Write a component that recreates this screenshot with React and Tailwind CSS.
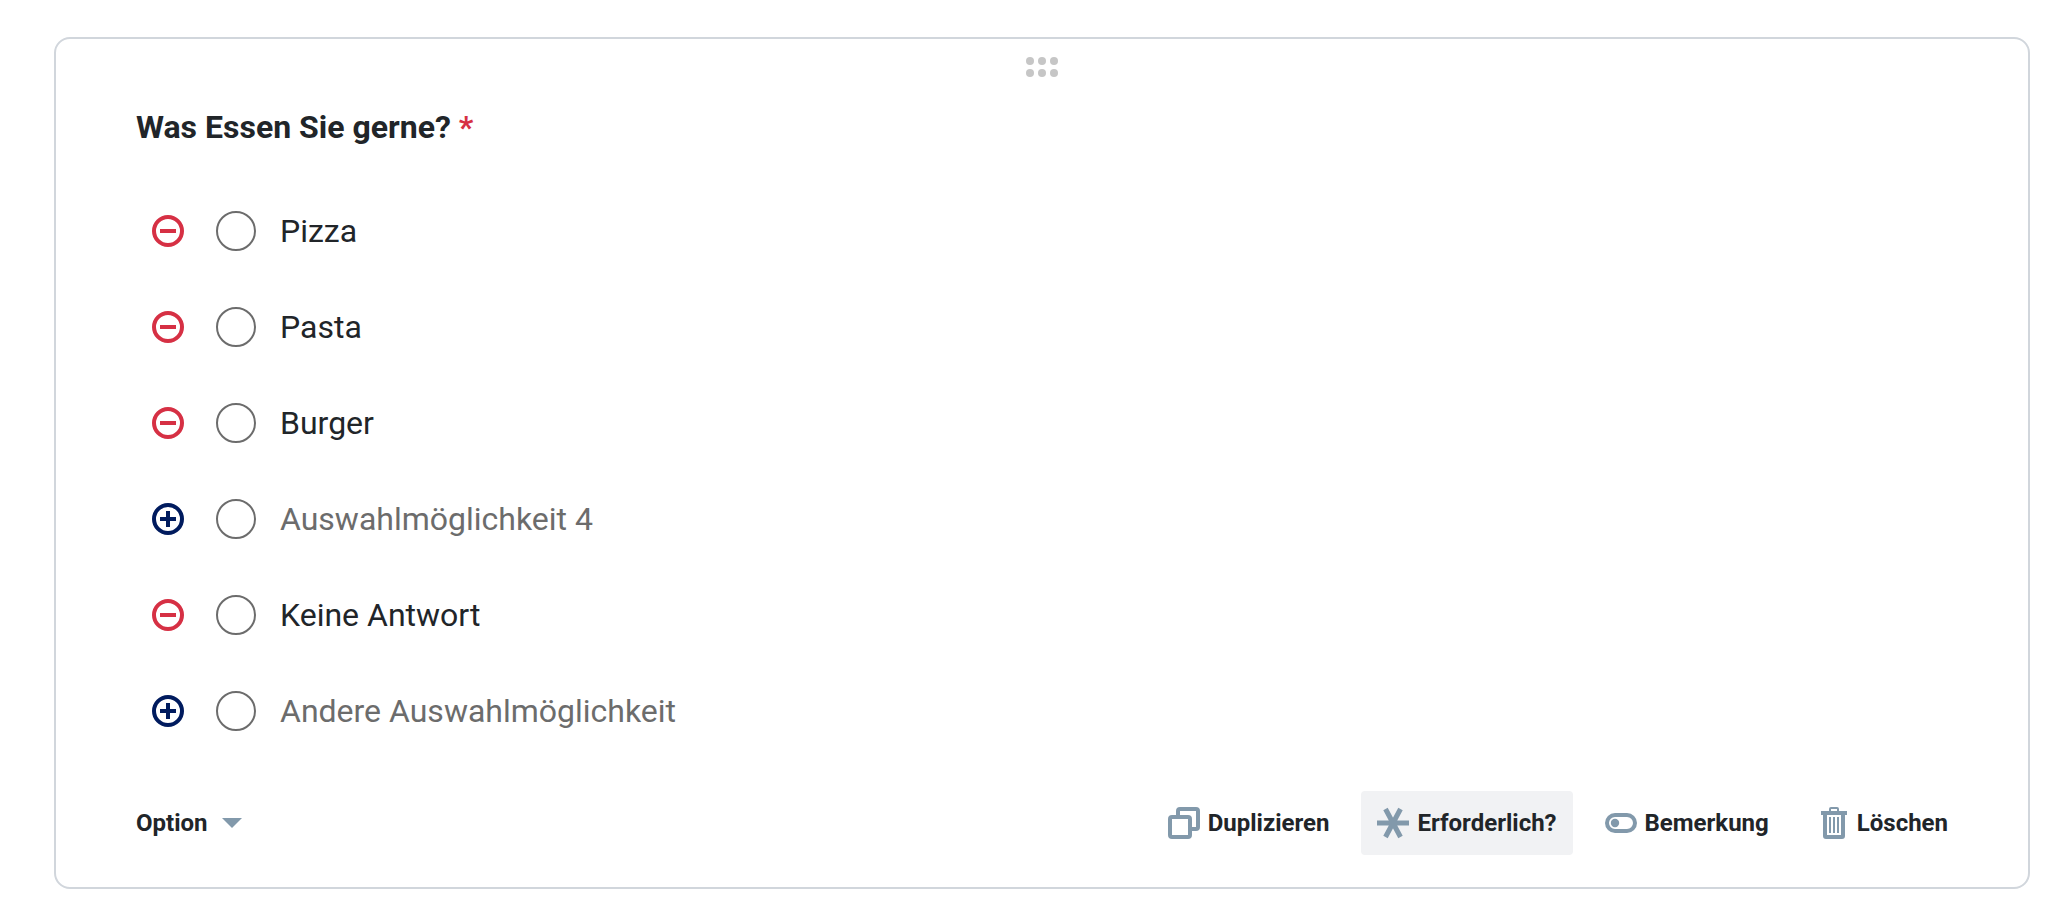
import { useState } from 'react';

const initialOptions = [
  { id: 1, value: 'Pizza', placeholder: 'Auswahlmöglichkeit 1', added: true },
  { id: 2, value: 'Pasta', placeholder: 'Auswahlmöglichkeit 2', added: true },
  { id: 3, value: 'Burger', placeholder: 'Auswahlmöglichkeit 3', added: true },
  { id: 4, value: '', placeholder: 'Auswahlmöglichkeit 4', added: false },
  { id: 5, value: 'Keine Antwort', placeholder: 'Keine Antwort', added: true },
  { id: 6, value: '', placeholder: 'Andere Auswahlmöglichkeit', added: false },
];

const DragIcon = () => (
  <svg viewBox="0 0 32 32" className="size-8" fill="currentColor" aria-hidden="true">
    {[10, 22].map((y) => [4, 16, 28].map((x) => <circle key={`${x}-${y}`} cx={x} cy={y} r="4" />))}
  </svg>
);

const MinusIcon = () => (
  <svg viewBox="0 0 32 32" className="size-8" fill="none" stroke="currentColor" strokeWidth="4" aria-hidden="true">
    <circle cx="16" cy="16" r="14" />
    <path d="M8 16h16" />
  </svg>
);

const PlusIcon = () => (
  <svg viewBox="0 0 32 32" className="size-8" fill="none" stroke="currentColor" strokeWidth="4" aria-hidden="true">
    <circle cx="16" cy="16" r="14" />
    <path d="M8 16h16M16 8v16" />
  </svg>
);

const CaretIcon = () => (
  <svg viewBox="0 0 20 10" className="h-[10px] w-5 text-[#8299ab]" fill="currentColor" aria-hidden="true">
    <path d="M0 0h20L10 10z" />
  </svg>
);

const DuplicateIcon = () => (
  <svg viewBox="0 0 32 32" className="size-8 text-[#8299ab]" fill="none" stroke="currentColor" strokeWidth="4" aria-hidden="true">
    <rect x="2" y="10" width="20" height="20" rx="2" />
    <path d="M10 8V4a2 2 0 0 1 2-2h16a2 2 0 0 1 2 2v16a2 2 0 0 1-2 2h-4" />
  </svg>
);

const AsteriskIcon = () => (
  <svg viewBox="0 0 32 32" className="size-8 text-[#8299ab]" fill="none" stroke="currentColor" strokeWidth="5" aria-hidden="true">
    <path d="M0 16h32M8.5 2l15 28M23.5 2l-15 28" />
  </svg>
);

const ToggleIcon = () => (
  <svg viewBox="0 0 32 32" className="size-8 text-[#8299ab]" fill="none" stroke="currentColor" strokeWidth="4" aria-hidden="true">
    <rect x="2" y="8" width="28" height="16" rx="8" />
    <circle cx="10" cy="16" r="4.2" fill="currentColor" stroke="none" />
  </svg>
);

const TrashIcon = () => (
  <svg viewBox="0 0 32 32" className="size-8 text-[#8299ab]" fill="none" stroke="currentColor" strokeWidth="2" aria-hidden="true">
    <path d="M13 4V2a1 1 0 0 1 1-1h6a1 1 0 0 1 1 1v2" />
    <path d="M4 6h26" strokeWidth="4" />
    <path d="M8 6v23a1 1 0 0 0 1 1h16a1 1 0 0 0 1-1V6" strokeWidth="4" />
    <path d="M13 10v16M17 10v16M21 10v16" />
  </svg>
);

const OptionRow = ({ option, onToggle, onChange }) => (
  <li className="flex h-24 items-center pl-4">
    <button
      type="button"
      onClick={() => onToggle(option.id)}
      aria-label={option.added ? 'Entfernen' : 'Hinzufügen'}
      className={`mr-8 shrink-0 cursor-pointer ${option.added ? 'text-[#d63044]' : 'text-[#001b5e]'}`}
    >
      {option.added ? <MinusIcon /> : <PlusIcon />}
    </button>
    <input
      type="radio"
      name="answer"
      aria-label={option.value || option.placeholder}
      className="mr-6 size-10 shrink-0 appearance-none rounded-full border-2 border-[#6c6c6c] checked:border-[12px]"
    />
    <input
      type="text"
      value={option.value}
      placeholder={option.placeholder}
      aria-label={option.placeholder}
      onChange={(e) => onChange(option.id, e.target.value)}
      className="h-12 min-w-0 flex-1 text-[32px] leading-[48px] outline-none placeholder:text-[#6c6c6c]"
    />
  </li>
);

const ActionButton = ({ icon, label, active, onClick }) => (
  <button
    type="button"
    onClick={onClick}
    aria-pressed={active}
    className={`flex h-16 cursor-pointer items-center gap-2 rounded px-4 ${active ? 'bg-[#f1f2f4]' : ''}`}
  >
    {icon}
    {label}
  </button>
);

const App = () => {
  const [options, setOptions] = useState(initialOptions);
  const [required, setRequired] = useState(true);

  const handleToggle = (id) => {
    setOptions(options.map((o) => (o.id === id ? { ...o, added: !o.added } : o)));
  };

  const handleChange = (id, value) => {
    setOptions(options.map((o) => (o.id === id ? { ...o, value } : o)));
  };

  return (
    <main className="bg-white pt-[37px] pr-8 pb-6 pl-[54px] font-['Roboto',sans-serif] text-[#212529]">
      <section className="rounded-2xl border-2 border-[#d1d6dc] px-16 pt-3 pb-8">
        {/* Drag handle */}
        <div className="flex justify-center">
          <button type="button" aria-label="Verschieben" className="cursor-grab text-[#c6c6c6]">
            <DragIcon />
          </button>
        </div>

        <h2 className="mt-5 px-4 text-[32px] leading-[48px] font-bold">
          Was Essen Sie gerne?{required && <span className="text-[#d63044]"> *</span>}
        </h2>

        <ul className="mt-8 px-4">
          {options.map((option) => (
            <OptionRow key={option.id} option={option} onToggle={handleToggle} onChange={handleChange} />
          ))}
        </ul>

        {/* Footer actions */}
        <footer className="mt-8 flex flex-wrap items-center justify-between text-2xl font-bold">
          <button type="button" aria-haspopup="menu" className="flex h-16 cursor-pointer items-center gap-3.5 px-4">
            Option
            <CaretIcon />
          </button>
          <div className="flex flex-wrap gap-4">
            <ActionButton icon={<DuplicateIcon />} label="Duplizieren" />
            <ActionButton
              icon={<AsteriskIcon />}
              label="Erforderlich?"
              active={required}
              onClick={() => setRequired(!required)}
            />
            <ActionButton icon={<ToggleIcon />} label="Bemerkung" />
            <ActionButton icon={<TrashIcon />} label="Löschen" />
          </div>
        </footer>
      </section>
    </main>
  );
};

export default App;
